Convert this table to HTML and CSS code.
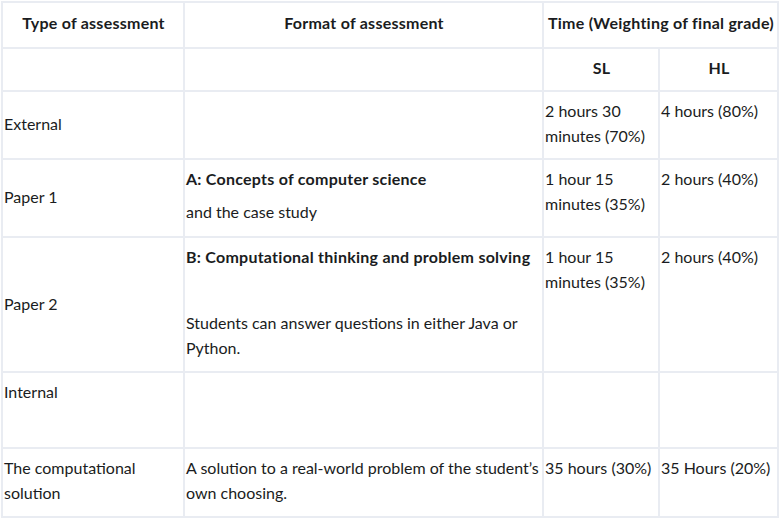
FILE: index.html
```html
<!DOCTYPE html>
<html lang="en">
<head>
<meta charset="utf-8">
<title>Assessment</title>
<link rel="stylesheet" href="styles.css">
</head>
<body>
<table class="grid">
  <colgroup>
    <col class="c1"><col class="c2"><col class="c3"><col class="c4">
  </colgroup>
  <tr class="r-head">
    <th>Type of assessment</th>
    <th>Format of assessment</th>
    <th colspan="2">Time (Weighting of final grade)</th>
  </tr>
  <tr class="r-sub">
    <td></td>
    <td></td>
    <th>SL</th>
    <th>HL</th>
  </tr>
  <tr class="r-ext">
    <td class="mid">External</td>
    <td></td>
    <td>2 hours 30 minutes (70%)</td>
    <td>4 hours (80%)</td>
  </tr>
  <tr class="r-p1">
    <td class="mid">Paper 1</td>
    <td><p class="b">A: Concepts of computer science</p><p>and the case study</p></td>
    <td>1 hour 15 minutes (35%)</td>
    <td>2 hours (40%)</td>
  </tr>
  <tr class="r-p2">
    <td class="mid">Paper 2</td>
    <td><p class="b">B: Computational thinking and problem solving</p><p>&nbsp;</p><p>Students can answer questions in either Java or Python.</p></td>
    <td>1 hour 15 minutes (35%)</td>
    <td>2 hours (40%)</td>
  </tr>
  <tr class="r-int">
    <td>Internal</td>
    <td></td>
    <td></td>
    <td></td>
  </tr>
  <tr class="r-sol">
    <td>The computational solution</td>
    <td>A solution to a real-world problem of the student’s own choosing.</td>
    <td>35 hours (30%)</td>
    <td>35 Hours (20%)</td>
  </tr>
</table>
</body>
</html>
```
FILE: styles.css
```css
html, body {
  margin: 0;
  padding: 0;
  background: #ffffff;
}
body {
  padding: 1px 0 0 1px;
  font-family: "Lato", "Open Sans", sans-serif;
  font-size: 16px;
  color: #1a1c21;
}
.grid {
  border-collapse: collapse;
  table-layout: fixed;
  width: 778px;
}
.c1 { width: 182px; }
.c2 { width: 359px; }
.c3 { width: 116px; }
.c4 { width: 119px; }
.grid th, .grid td {
  border: 2px solid #e9ecf2;
  padding: 6px 0 7px 1px;
  line-height: 25px;
  vertical-align: top;
  text-align: left;
  font-weight: 400;
}
.grid th {
  text-align: center;
  vertical-align: middle;
  font-weight: 700;
  letter-spacing: 0.25px;
  padding: 4px 0 9px 1px;
}
.grid td.mid {
  vertical-align: middle;
  padding-bottom: 9px;
}
.grid p {
  margin: 0 0 8px 0;
}
.grid p:last-child {
  margin-bottom: 0;
}
.grid p.b {
  font-weight: 700;
  letter-spacing: 0.25px;
}
.r-head { height: 46px; }
.r-sub { height: 43px; }
.r-ext { height: 68px; }
.r-p1 { height: 78px; }
.r-p2 { height: 135px; }
.r-int { height: 76px; }
.r-sol { height: 69px; }
```
